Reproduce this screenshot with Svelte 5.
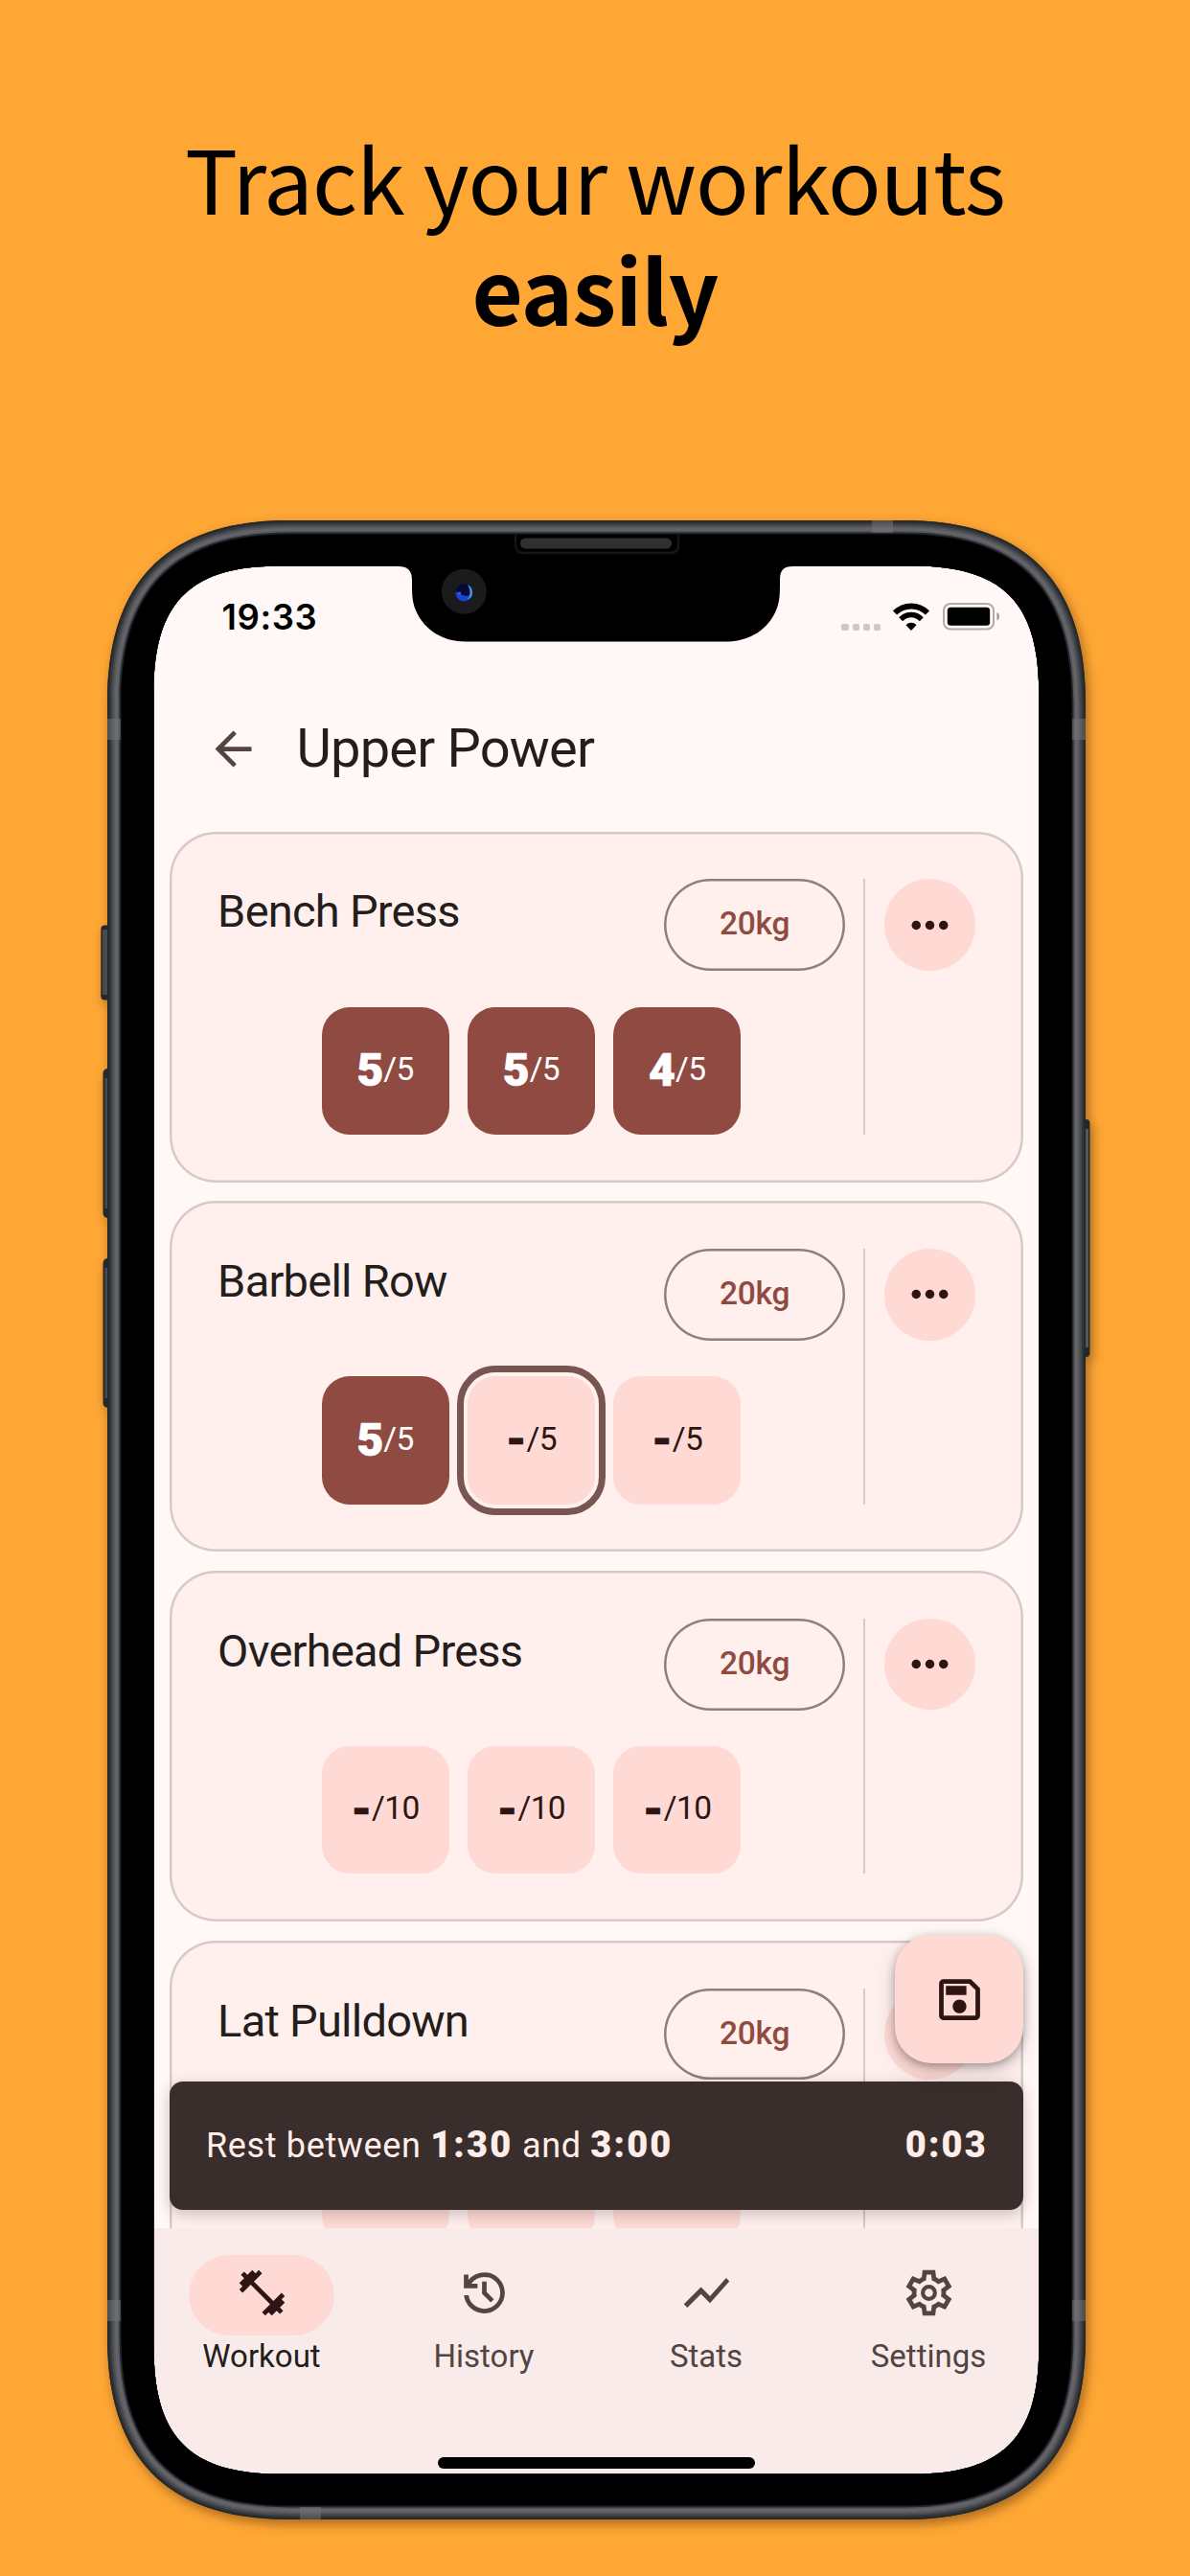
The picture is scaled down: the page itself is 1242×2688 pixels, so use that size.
<script>
  const exercises = [
    { name: 'Bench Press', weight: '20kg', target: 5, sets: ['5', '5', '4'], active: -1 },
    { name: 'Barbell Row', weight: '20kg', target: 5, sets: ['5', '-', '-'], active: 1 },
    { name: 'Overhead Press', weight: '20kg', target: 10, sets: ['-', '-', '-'], active: -1 },
    { name: 'Lat Pulldown', weight: '20kg', target: 10, sets: [], active: -1 }
  ];

  const tabs = [
    {
      label: 'Workout',
      box: '0 0 24 24',
      d: 'M20.57 14.86 22 13.43 20.57 12 17 15.57 8.43 7 12 3.43 10.57 2 9.14 3.43 7.71 2 5.57 4.14 4.14 2.71 2.71 4.14l1.43 1.43L2 7.71l1.43 1.43L2 10.57 3.43 12 7 8.43 15.57 17 12 20.57 13.43 22l1.43-1.43L16.29 22l2.14-2.14 1.43 1.43 1.43-1.43-1.43-1.43L22 16.29z'
    },
    {
      label: 'History',
      box: '0 -960 960 960',
      d: 'M480-120q-138 0-240.500-91.500T122-440h82q14 104 92.500 172T480-200q117 0 198.500-81.500T760-480q0-117-81.500-198.500T480-760q-69 0-129 32t-101 88h110v80H120v-240h80v94q51-64 124.500-99T480-840q75 0 140.500 28.500t114 77q48.500 48.500 77 114T840-480q0 75-28.500 140.500t-77 114q-48.500 48.500-114 77T480-120Zm112-192L440-464v-216h80v184l128 128-56 56Z'
    },
    {
      label: 'Stats',
      box: '0 0 24 24',
      d: 'M3.500 18.490l6-6.010 4 4L22 6.920l-1.410-1.410-7.090 7.970-4-4L2 16.990z'
    },
    {
      label: 'Settings',
      box: '0 -960 960 960',
      ring: true,
      d: 'M370-80l-16-128q-13-5-24.500-12T307-235l-119 50L78-375l103-78q-1-7-1-13.500v-27q0-6.500 1-13.500L78-585l110-190 119 50q11-8 23-15t24-12l16-128h220l16 128q13 5 24.500 12t22.500 15l119-50 110 190-103 78q1 7 1 13.500v27q0 6.500-2 13.500l103 78-110 190-118-50q-11 8-23 15t-24 12L590-80H370Zm70-80h79l14-106q31-8 57.500-23.500T639-327l99 41 39-68-86-65q5-14 7-29.500t2-31.500q0-16-2-31.500t-7-29.500l86-65-39-68-99 42q-22-23-48.500-38.500T533-694l-13-106h-79l-14 106q-31 8-57.500 23.500T321-633l-99-41-39 68 86 64q-5 15-7 30t-2 32q0 16 2 31t7 30l-86 65 39 68 99-42q22 23 48.500 38.500T427-266l13 106Z'
    }
  ];

  // Closed outline with smooth, continuous-curvature corners.
  // l: length of the corner along each edge, a: distance of the handles from the corner.
  function smooth(x0, y0, x1, y1, l, a) {
    return (
      `M${x0} ${y0 + l}C${x0} ${y0 + a} ${x0 + a} ${y0} ${x0 + l} ${y0}` +
      `H${x1 - l}C${x1 - a} ${y0} ${x1} ${y0 + a} ${x1} ${y0 + l}` +
      `V${y1 - l}C${x1} ${y1 - a} ${x1 - a} ${y1} ${x1 - l} ${y1}` +
      `H${x0 + l}C${x0 + a} ${y1} ${x0} ${y1 - a} ${x0} ${y1 - l}Z`
    );
  }

  const W = 1021;
  const H = 2086;
  const display = smooth(48.5, 47.5, 972.3, 2038.6, 132, 38);
  const body = (i) => smooth(i, i, W - i, H - i, 190 - i, 63 - i * 0.45);
  const metal = [
    [0, '#26292c'],
    [2, '#33363a'],
    [4, '#45474b'],
    [6, '#56585c'],
    [8, '#626468'],
    [11, '#55565b'],
    [12.6, '#22232b'],
    [14.5, '#000']
  ];
  const bands = [
    [0, 207, 14, 22], [W - 14, 207, 14, 22],
    [0, 1857, 14, 22], [W - 14, 1857, 14, 22],
    [798, 0, 22, 13], [201, H - 13, 22, 13]
  ];
</script>

<main>
  <h1>Track your workouts<br /><strong>easily</strong></h1>

  <div class="phone">
    <svg class="frame shadow" viewBox="0 0 {W} {H}" fill="#26292c">
      <rect x="-6.700" y="422.500" width="14" height="78" rx="4" />
      <rect x="-4.500" y="572" width="14" height="156" rx="5" />
      <rect x="-4.500" y="770" width="14" height="156" rx="5" />
      <rect x={W - 8} y="625" width="12.500" height="248" rx="4" />
      <path d={body(0)} />
    </svg>

    <div class="screen">
      <div class="status">
        <span class="clock">19:33</span>
        <div class="indicators">
          <span class="signal"><i></i><i></i><i></i><i></i></span>
          <svg class="wifi" viewBox="0 0 38 29" fill="none" stroke="#000">
            <path d="M2 10.500C11.500 1 26.500 1 36 10.500" stroke-width="6" />
            <path d="M8.200 17.200C14.500 11 23.500 11 29.800 17.200" stroke-width="5.600" />
            <path d="M19 29 13.500 23.300C16.300 20 21.700 20 24.500 23.300Z" fill="#000" stroke="none" />
          </svg>
          <svg class="battery" viewBox="0 0 60 29">
            <rect x="1" y="1" width="52" height="26.500" rx="7" fill="none" stroke="#b3abaa" stroke-width="2" />
            <rect x="4.800" y="4.800" width="44.400" height="19" rx="3.500" />
            <path d="M56.500 10c3.300 1.500 3.300 7 0 8.500z" fill="#9d9594" />
          </svg>
        </div>
      </div>

      <header>
        <svg class="icon" viewBox="0 0 24 24"><path d="M20 11H7.830l5.590-5.590L12 4l-8 8 8 8 1.410-1.410L7.830 13H20v-2z" /></svg>
        <h2>Upper Power</h2>
      </header>

      <section class="content">
        {#each exercises as ex}
          <article>
            <div class="exercise">
              <div class="top">
                <h3>{ex.name}</h3>
                <button class="weight">{ex.weight}</button>
              </div>
              <div class="sets">
                {#each ex.sets as reps, i}
                  <div class="set" class:done={reps !== '-'} class:active={i === ex.active}>
                    <b>{reps}</b><span>/{ex.target}</span>
                  </div>
                {:else}
                  <div class="set"></div>
                  <div class="set"></div>
                  <div class="set"></div>
                {/each}
              </div>
            </div>
            <div class="divider"></div>
            <div class="more">
              <svg class="icon" viewBox="0 0 24 24"><circle cx="6" cy="12" r="2" /><circle cx="12" cy="12" r="2" /><circle cx="18" cy="12" r="2" /></svg>
            </div>
          </article>
        {/each}

        <div class="snackbar">
          <p>Rest between <b>1:30</b> and <b>3:00</b></p>
          <b>0:03</b>
        </div>
        <div class="fab">
          <svg class="icon" viewBox="0 0 24 24"><path d="M17 3H5c-1.110 0-2 .9-2 2v14c0 1.100.89 2 2 2h14c1.100 0 2-.9 2-2V7l-4-4zm2 16H5V5h11.170L19 7.830V19zm-7-7c-1.660 0-3 1.340-3 3s1.340 3 3 3 3-1.340 3-3-1.340-3-3-3zM6 6h9v4H6V6z" /></svg>
        </div>
      </section>

      <nav>
        {#each tabs as tab, i}
          <div class="tab" class:current={i === 0}>
            <div class="pill">
              <svg class="icon" viewBox={tab.box}>
                <path d={tab.d} fill-rule="evenodd" />
                {#if tab.ring}<circle class="ring" cx="480" cy="-480" r="107" />{/if}
              </svg>
            </div>
            <span>{tab.label}</span>
          </div>
        {/each}
      </nav>
    </div>

    <svg class="frame" viewBox="0 0 {W} {H}">
      <rect x="-5" y="427" width="5" height="68" fill="#484b50" />
      <rect x="-2.500" y="582" width="2.500" height="136" fill="#484b50" />
      <rect x="-2.500" y="780" width="2.500" height="136" fill="#484b50" />
      <rect x={W} y="635" width="3" height="228" fill="#55575b" />
      {#each metal as [inset, color]}
        <path fill-rule="evenodd" d={body(inset) + display} fill={color} />
      {/each}
      {#each bands as [x, y, w, h]}
        <rect {x} {y} width={w} height={h} fill="#74767a" opacity=".5" />
      {/each}
      <path d="M304 46V48C313 48 318 52 318 62C318 78 318 84 322 94C331 115 351 126.500 374 126.500H646C669 126.500 689 115 698 94C702 84 702 78 702 62C702 52 706 48 715 48V46Z" />
      <path class="grille" d="M426 15v11q0 8 9 8h152q9 0 9-8V15" />
      <rect x="431" y="18.500" width="158" height="11" rx="5.500" fill="#303030" />
      <circle cx="372.300" cy="74.200" r="23.500" fill="#1b1b1e" />
      <circle cx="372.300" cy="75" r="9" fill="#060a38" />
      <path d="M363.500 74a8.800 8.800 0 0 0 17.500 3q-7 4.500-17.500-3z" fill="#1546d8" />
      <path d="M376 67a8.800 8.800 0 0 1 0 16q5-8 0-16z" fill="#4a8fd8" />
      <circle cx="367.500" cy="76" r="1.500" fill="#7b45d8" />
      <rect x="345" y="2021" width="331" height="12" rx="6" />
    </svg>
  </div>
</main>

<style>
  :global(body) {
    margin: 0;
    background: #ffa735;
  }
  main {
    width: 1242px;
    height: 2688px;
    overflow: hidden;
    background: #ffa735;
    font-family: Roboto, sans-serif;
    color: #231e1c;
  }
  h1 {
    margin: 0;
    height: 542.500px;
    box-sizing: border-box;
    padding-top: 126px;
    text-align: center;
    font: 400 92px/115.500px 'Noto Sans CJK JP', 'Noto Sans', sans-serif;
    letter-spacing: -0.800px;
    color: #000;
  }
  h1 strong {
    font-weight: 700;
  }
  .phone {
    position: relative;
    width: 1021px;
    height: 2086px;
    margin-left: 112px;
    box-sizing: border-box;
    padding: 47.500px 48.500px;
  }
  .frame {
    position: absolute;
    inset: 0;
    width: 100%;
    height: 100%;
    overflow: visible;
    pointer-events: none;
  }
  .shadow {
    filter: drop-shadow(3px 5px 6px rgba(60, 30, 0, 0.45));
  }
  .grille {
    fill: none;
    stroke: #14151a;
    stroke-width: 2.500;
  }
  .screen {
    position: relative;
    display: flex;
    flex-direction: column;
    height: 1992px;
    overflow: hidden;
    border-radius: 90px;
    background: #fff8f6;
  }
  .icon {
    display: block;
    width: 57px;
    height: 57px;
    fill: currentColor;
  }
  .status {
    display: flex;
    justify-content: space-between;
    align-items: center;
    height: 107px;
    padding: 0 40px 0 71px;
    color: #000;
  }
  .clock {
    font: 600 36.500px/44px Inter, sans-serif;
    letter-spacing: 0.600px;
  }
  .indicators {
    display: flex;
    align-items: flex-end;
  }
  .signal {
    display: flex;
    gap: 3.800px;
    margin-right: 13px;
  }
  .signal i {
    width: 7.300px;
    height: 7.500px;
    border-radius: 2px;
    background: #cfc6c5;
  }
  .wifi {
    width: 38px;
    height: 29px;
    margin-right: 13.500px;
  }
  .battery {
    width: 60px;
    height: 29px;
    margin-right: 1px;
  }
  header {
    display: flex;
    align-items: center;
    gap: 38px;
    height: 170.700px;
    box-sizing: border-box;
    padding: 0 0 2px 54px;
  }
  header .icon {
    color: #534341;
  }
  h2 {
    margin: 0;
    font-size: 56px;
    line-height: 68px;
    font-weight: 400;
    letter-spacing: -0.800px;
  }
  .content {
    position: relative;
    flex: 1;
    min-height: 0;
    overflow: hidden;
    display: flex;
    flex-direction: column;
    gap: 19.800px;
    padding: 0 16.700px 0 16.800px;
  }
  article {
    flex: none;
    display: flex;
    gap: 19.300px;
    height: 366px;
    box-sizing: border-box;
    padding: 49.800px;
    border-radius: 48px;
    background: #fff0ee;
    box-shadow: inset 0 0 0 2.500px #d8c8c6;
  }
  .exercise {
    flex: 1;
    display: flex;
    flex-direction: column;
    justify-content: space-between;
  }
  .top {
    display: flex;
    justify-content: space-between;
  }
  h3 {
    margin: 6px 0 0;
    font-size: 47px;
    line-height: 56px;
    font-weight: 400;
    letter-spacing: -0.750px;
  }
  .weight {
    width: 188.500px;
    height: 95.500px;
    padding: 0 0 2px;
    border: 0;
    box-shadow: inset 0 0 0 2.500px #8c7f7d;
    border-radius: 48px;
    background: none;
    color: #8f4a42;
    font: 500 33.500px/40px Roboto, sans-serif;
    letter-spacing: -0.300px;
  }
  .sets {
    display: flex;
    justify-content: center;
    gap: 19px;
  }
  .set {
    display: flex;
    align-items: center;
    justify-content: center;
    width: 133.300px;
    height: 133.300px;
    border-radius: 29px;
    background: #ffdad5;
    color: #2c1512;
  }
  .set b {
    font-size: 48px;
    line-height: 56px;
    font-weight: 900;
    -webkit-text-stroke: 0.700px currentColor;
  }
  .set span {
    font-size: 33.500px;
    line-height: 40px;
    margin-bottom: 3px;
    letter-spacing: -0.600px;
  }
  .done {
    background: #8f4a42;
    color: #fff;
  }
  .active {
    outline: 7.300px solid #775651;
    outline-offset: 4.500px;
  }
  .divider {
    width: 2.300px;
    background: #d8c8c6;
  }
  .more {
    display: grid;
    place-items: center;
    width: 95.300px;
    height: 95.300px;
    border-radius: 50%;
    background: #ffdad5;
    color: #2c1512;
  }
  .snackbar {
    position: absolute;
    left: 16.500px;
    right: 16.500px;
    bottom: 19.500px;
    display: flex;
    align-items: center;
    justify-content: space-between;
    height: 133.400px;
    box-sizing: border-box;
    padding: 0 37px 3px 38px;
    border-radius: 14px;
    background: #392e2c;
    box-shadow: 0 4px 16px rgba(0, 0, 0, 0.22);
    color: #ffedea;
    font-size: 36px;
    letter-spacing: 0.650px;
  }
  .snackbar p {
    margin: 0;
  }
  .snackbar b {
    font-size: 38px;
    font-weight: 900;
    letter-spacing: 2.200px;
  }
  .fab {
    position: absolute;
    right: 16.500px;
    bottom: 172.300px;
    display: grid;
    place-items: center;
    width: 133.600px;
    height: 133.600px;
    border-radius: 38px;
    background: #ffdad5;
    color: #2c1512;
    box-shadow: 0 3px 10px rgba(0, 0, 0, 0.3), 0 8px 24px rgba(0, 0, 0, 0.15);
  }
  nav {
    flex: none;
    display: grid;
    grid-template-columns: repeat(4, 232px);
    height: 256.700px;
    padding-top: 28px;
    box-sizing: border-box;
    margin-left: -3.500px;
    margin-right: -3.500px;
    background: #f8ebe9;
    color: #534341;
  }
  .tab {
    display: flex;
    flex-direction: column;
    align-items: center;
  }
  .pill {
    display: grid;
    place-items: center;
    width: 152px;
    height: 83.500px;
    box-sizing: border-box;
    border-radius: 42px;
  }
  .pill .icon {
    margin-bottom: 6px;
  }
  .tab span {
    margin-top: 2px;
    font-size: 33px;
    line-height: 40px;
  }
  .current {
    color: #231e1c;
  }
  .current .pill {
    background: #ffdad5;
    color: #2c1512;
  }
  .ring {
    fill: none;
    stroke: currentColor;
    stroke-width: 70;
  }
</style>
